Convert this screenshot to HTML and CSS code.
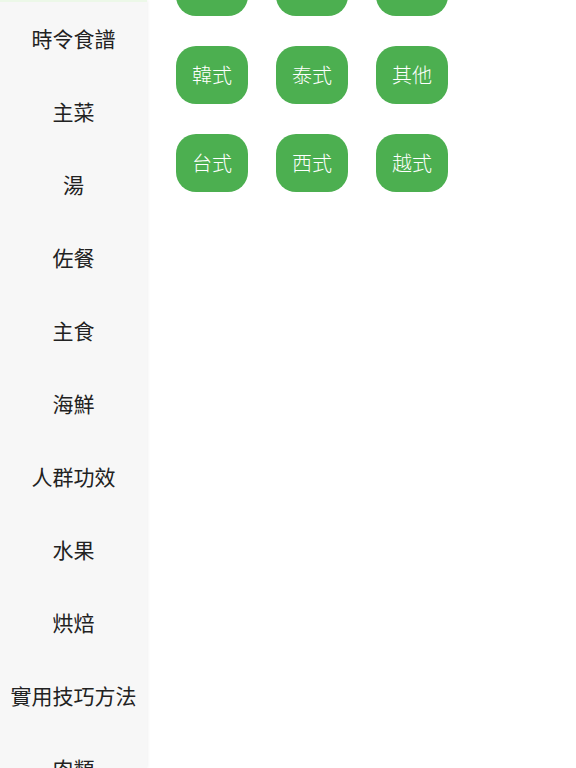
FILE: index.html
```html
<!DOCTYPE html>
<html lang="zh-Hant">
<head>
<meta charset="utf-8">
<link rel="stylesheet" href="styles.css">
</head>
<body>
<div class="app">
  <nav class="sidebar">
    <div class="active-tail"></div>
    <div class="item">時令食譜</div>
    <div class="item">主菜</div>
    <div class="item">湯</div>
    <div class="item">佐餐</div>
    <div class="item">主食</div>
    <div class="item">海鮮</div>
    <div class="item">人群功效</div>
    <div class="item">水果</div>
    <div class="item">烘焙</div>
    <div class="item">實用技巧方法</div>
    <div class="item">肉類</div>
  </nav>
  <main class="content">
    <div class="grid">
      <div class="tag">中式</div>
      <div class="tag">日式</div>
      <div class="tag">粵式</div>
      <div class="tag">韓式</div>
      <div class="tag">泰式</div>
      <div class="tag">其他</div>
      <div class="tag">台式</div>
      <div class="tag">西式</div>
      <div class="tag">越式</div>
    </div>
  </main>
</div>
</body>
</html>
```
FILE: styles.css
```css
html, body {
  margin: 0;
  padding: 0;
  height: 768px;
  overflow: hidden;
  background: #ffffff;
  font-family: "Noto Sans CJK TC", "Noto Sans", sans-serif;
}
.app {
  display: flex;
  height: 768px;
}
.sidebar {
  width: 147px;
  flex: 0 0 147px;
  background: #f7f7f7;
  box-shadow: 1px 0 3px rgba(0, 0, 0, 0.06);
  display: flex;
  flex-direction: column;
  overflow: hidden;
  position: relative;
  z-index: 1;
}
.active-tail {
  height: 2px;
  flex: 0 0 2px;
  background: #ecf8e8;
}
.item {
  flex: 0 0 73px;
  height: 73px;
  display: flex;
  align-items: center;
  justify-content: center;
  font-size: 21px;
  font-weight: 400;
  line-height: 1;
  color: #222222;
  white-space: nowrap;
}
.content {
  flex: 1;
  padding-left: 29px;
  overflow: hidden;
}
.grid {
  display: grid;
  grid-template-columns: repeat(3, 72px);
  column-gap: 28px;
  row-gap: 30px;
  margin-top: -42px;
}
.tag {
  height: 58px;
  border-radius: 20px;
  background: #4caf50;
  color: #ffffff;
  font-size: 20px;
  font-weight: 300;
  line-height: 1;
  display: flex;
  align-items: center;
  justify-content: center;
  white-space: nowrap;
}
```
